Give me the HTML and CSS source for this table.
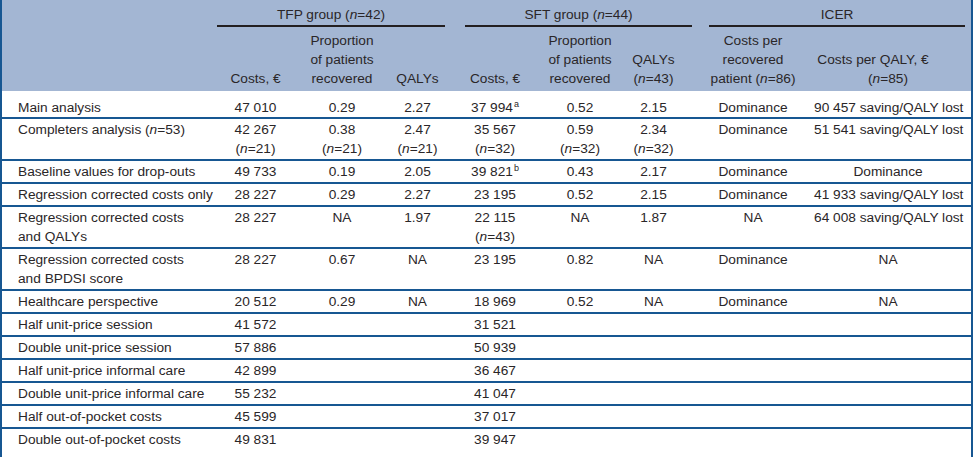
FILE: index.html
```html
<!DOCTYPE html>
<html lang="en">
<head>
<meta charset="utf-8">
<title>Sensitivity analyses</title>
<link rel="stylesheet" href="styles.css">
</head>
<body>
<table class="results">
  <colgroup>
    <col class="c-label">
    <col class="c-tfp-cost">
    <col class="c-tfp-prop">
    <col class="c-tfp-qaly">
    <col class="c-sft-cost">
    <col class="c-sft-prop">
    <col class="c-sft-qaly">
    <col class="c-icer-rec">
    <col class="c-icer-qaly">
  </colgroup>
  <thead>
    <tr class="group-row">
      <th class="blank" rowspan="2"></th>
      <th colspan="3"><div class="group group-tfp">TFP group (<i>n</i>=42)</div></th>
      <th colspan="3"><div class="group group-sft">SFT group (<i>n</i>=44)</div></th>
      <th colspan="2"><div class="group group-icer">ICER</div></th>
    </tr>
    <tr class="sub-row">
      <th>Costs, €</th>
      <th>Proportion<br>of patients<br>recovered</th>
      <th>QALYs</th>
      <th>Costs, €</th>
      <th>Proportion<br>of patients<br>recovered</th>
      <th>QALYs<br>(<i>n</i>=43)</th>
      <th>Costs per<br>recovered<br>patient (<i>n</i>=86)</th>
      <th class="last"><span class="shift">Costs per QALY, €</span><br>(<i>n</i>=85)</th>
    </tr>
  </thead>
  <tbody>
    <tr class="first">
      <td class="label">Main analysis</td>
      <td>47 010</td><td>0.29</td><td>2.27</td>
      <td>37 994<sup>a</sup></td><td>0.52</td><td>2.15</td>
      <td>Dominance</td><td class="last">90 457 saving/QALY lost</td>
    </tr>
    <tr>
      <td class="label">Completers analysis (<i>n</i>=53)</td>
      <td>42 267<br>(<i>n</i>=21)</td><td>0.38<br>(<i>n</i>=21)</td><td>2.47<br>(<i>n</i>=21)</td>
      <td>35 567<br>(<i>n</i>=32)</td><td>0.59<br>(<i>n</i>=32)</td><td>2.34<br>(<i>n</i>=32)</td>
      <td>Dominance</td><td class="last">51 541 saving/QALY lost</td>
    </tr>
    <tr>
      <td class="label">Baseline values for drop-outs</td>
      <td>49 733</td><td>0.19</td><td>2.05</td>
      <td>39 821<sup>b</sup></td><td>0.43</td><td>2.17</td>
      <td>Dominance</td><td class="last">Dominance</td>
    </tr>
    <tr>
      <td class="label">Regression corrected costs only</td>
      <td>28 227</td><td>0.29</td><td>2.27</td>
      <td>23 195</td><td>0.52</td><td>2.15</td>
      <td>Dominance</td><td class="last">41 933 saving/QALY lost</td>
    </tr>
    <tr>
      <td class="label">Regression corrected costs<br>and QALYs</td>
      <td>28 227</td><td>NA</td><td>1.97</td>
      <td>22 115<br>(<i>n</i>=43)</td><td>NA</td><td>1.87</td>
      <td>NA</td><td class="last">64 008 saving/QALY lost</td>
    </tr>
    <tr>
      <td class="label">Regression corrected costs<br>and BPDSI score</td>
      <td>28 227</td><td>0.67</td><td>NA</td>
      <td>23 195</td><td>0.82</td><td>NA</td>
      <td>Dominance</td><td class="last">NA</td>
    </tr>
    <tr>
      <td class="label">Healthcare perspective</td>
      <td>20 512</td><td>0.29</td><td>NA</td>
      <td>18 969</td><td>0.52</td><td>NA</td>
      <td>Dominance</td><td class="last">NA</td>
    </tr>
    <tr>
      <td class="label">Half unit-price session</td>
      <td>41 572</td><td></td><td></td>
      <td>31 521</td><td></td><td></td>
      <td></td><td class="last"></td>
    </tr>
    <tr>
      <td class="label">Double unit-price session</td>
      <td>57 886</td><td></td><td></td>
      <td>50 939</td><td></td><td></td>
      <td></td><td class="last"></td>
    </tr>
    <tr>
      <td class="label">Half unit-price informal care</td>
      <td>42 899</td><td></td><td></td>
      <td>36 467</td><td></td><td></td>
      <td></td><td class="last"></td>
    </tr>
    <tr>
      <td class="label">Double unit-price informal care</td>
      <td>55 232</td><td></td><td></td>
      <td>41 047</td><td></td><td></td>
      <td></td><td class="last"></td>
    </tr>
    <tr>
      <td class="label">Half out-of-pocket costs</td>
      <td>45 599</td><td></td><td></td>
      <td>37 017</td><td></td><td></td>
      <td></td><td class="last"></td>
    </tr>
    <tr class="final">
      <td class="label">Double out-of-pocket costs</td>
      <td>49 831</td><td></td><td></td>
      <td>39 947</td><td></td><td></td>
      <td></td><td class="last"></td>
    </tr>
  </tbody>
</table>
</body>
</html>
```

FILE: styles.css
```css
html, body {
  margin: 0;
  padding: 0;
  background: #ffffff;
}

body {
  font-family: "Liberation Sans", Arial, sans-serif;
  font-size: 13.7px;
  line-height: 19px;
  color: #2a2628;
}

.results {
  width: 973px;
  table-layout: fixed;
  border-collapse: separate;
  border-spacing: 0;
  border-left: 2px solid #175792;
  border-right: 2px solid #175792;
}

.c-label { width: 215px; }
.c-tfp-cost { width: 77px; }
.c-tfp-prop { width: 96px; }
.c-tfp-qaly { width: 55px; }
.c-sft-cost { width: 100px; }
.c-sft-prop { width: 70px; }
.c-sft-qaly { width: 77px; }
.c-icer-rec { width: 122px; }
.c-icer-qaly { width: 157px; }

.results th,
.results td {
  padding: 0;
  text-align: center;
  font-weight: normal;
  white-space: nowrap;
}

.results thead th {
  background: #a3b6d3;
}

.group-row th {
  padding-top: 5px;
  vertical-align: top;
}

.group {
  padding-bottom: 1px;
  border-bottom: 2px solid #231f20;
}

.group-sft { margin-left: 20px; margin-right: 0; }
.group-icer { margin-left: 17px; margin-right: 6px; }

.sub-row th {
  padding-top: 4px;
  padding-bottom: 3px;
  vertical-align: bottom;
}

.shift {
  display: inline-block;
  margin-right: 30px;
}

.results .last {
  padding-right: 9px;
}

.results td {
  vertical-align: top;
  border-top: 2px solid #175792;
  padding-top: 1px;
  padding-bottom: 1px;
}

.results tr.first td {
  border-top: 0;
  padding-top: 7px;
  padding-bottom: 0;
}

.results tr.final td {
  padding-bottom: 20px;
}

.results td.label {
  text-align: left;
  padding-left: 16px;
}

sup {
  font-size: 9px;
  line-height: 0;
  vertical-align: 5px;
  margin-left: 1px;
}

i {
  font-style: italic;
}
```
